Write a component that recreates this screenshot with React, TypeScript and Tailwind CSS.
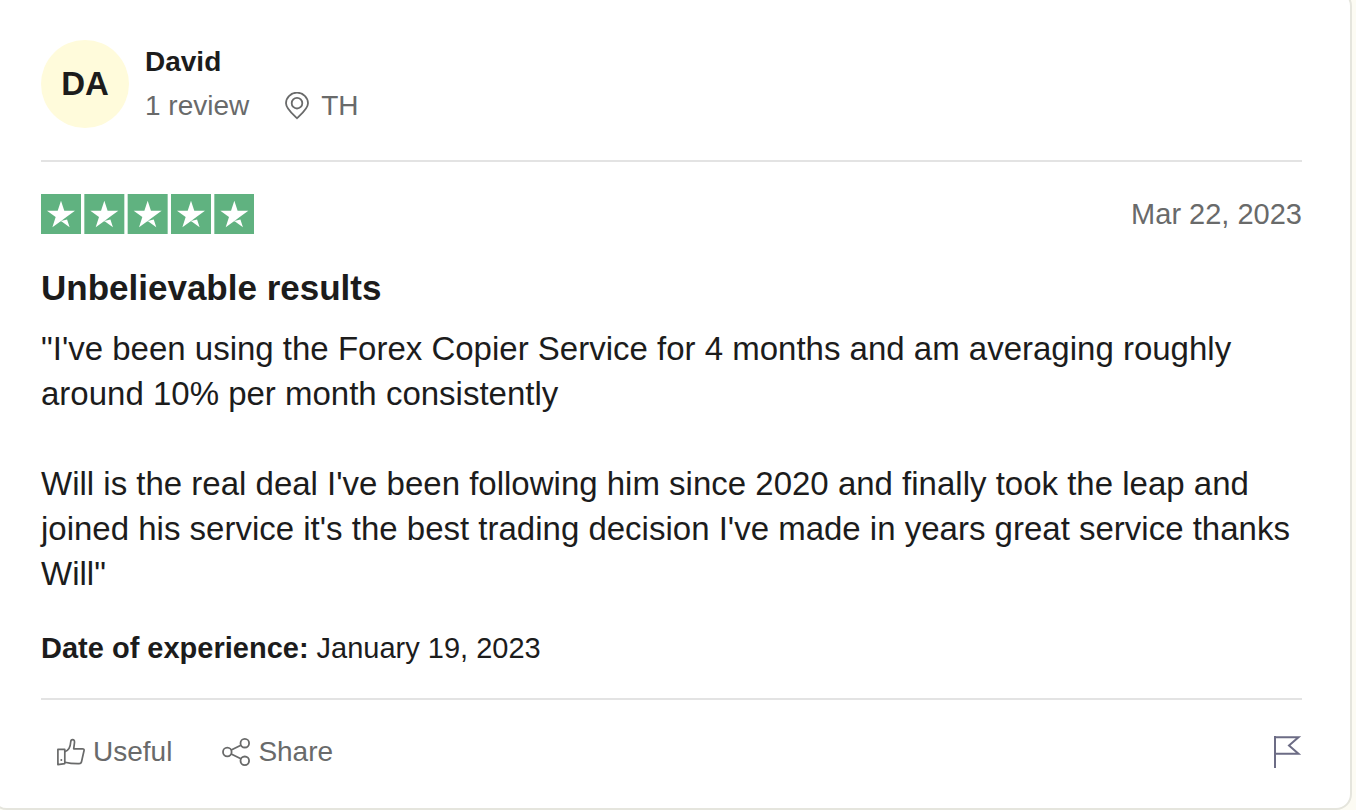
import type { ReactNode } from 'react'

interface Review {
  initials: string
  name: string
  count: string
  country: string
  date: string
  title: string
  paragraphs: string[]
  experienced: string
}

const review: Review = {
  initials: 'DA',
  name: 'David',
  count: '1 review',
  country: 'TH',
  date: 'Mar 22, 2023',
  title: 'Unbelievable results',
  paragraphs: [
    '"I\'ve been using the Forex Copier Service for 4 months and am averaging roughly around 10% per month consistently',
    'Will is the real deal I\'ve been following him since 2020 and finally took the leap and joined his service it\'s the best trading decision I\'ve made in years great service thanks Will"',
  ],
  experienced: 'January 19, 2023',
}

const PinIcon = () => (
  <svg className="w-6 h-7" viewBox="0 0 24 28" fill="none" stroke="currentColor" strokeWidth="1.8" aria-hidden="true">
    <path d="M12 26.2C8.500 22.600 1 17 1 11.300a11 10.600 0 0 1 22 0c0 5.700-7.500 11.300-11 14.900z" />
    <circle cx="12" cy="11.200" r="5.300" />
  </svg>
)

const ThumbIcon = () => (
  <svg className="w-7 h-7" viewBox="0 0 28 28" fill="none" stroke="currentColor" strokeWidth="1.7" strokeLinejoin="round" aria-hidden="true">
    <path d="M.9 11.400h6.900v14.200l-6.900 1z" />
    <path d="M7.800 13.700c3.400-1 5.600-4.400 5.900-9.700.1-1.600.8-2.400 1.900-2.400 1.300 0 2 1 1.900 2.700L16.700 10.800h8.600c1.500 0 2 .7 1.700 2l-2.500 11c-.3 1.400-1 1.900-2.400 1.900-5 .1-10-.4-14.300-1.500" />
    <circle cx="4.300" cy="22" r="1" fill="currentColor" stroke="none" />
  </svg>
)

const ShareIcon = () => (
  <svg className="w-7 h-7" viewBox="0 0 28 28" fill="none" stroke="currentColor" strokeWidth="1.8" aria-hidden="true">
    <circle cx="5.300" cy="14" r="4.300" />
    <circle cx="22.800" cy="5.200" r="4.300" />
    <circle cx="22.800" cy="22.800" r="4.300" />
    <path d="M9.200 12 18.900 7.200M9.200 16l9.700 4.800" />
  </svg>
)

const FlagIcon = () => (
  <svg className="w-7 h-8" viewBox="0 0 28 32" fill="none" stroke="currentColor" strokeWidth="2" aria-hidden="true">
    <path d="M1 32V0M1 1.300h23.500L15 9.500l9.500 8.200H1" />
  </svg>
)

const Stars = () => (
  <svg className="h-10 w-auto" viewBox="0 0 512 96" role="img" aria-label="Rated 5 out of 5 stars">
    {[0, 104, 208, 312, 416].map(x => (
      <g key={x} transform={`translate(${x} 0)`}>
        <path fill="#60b280" d="M0 0h96v96H0z" />
        <path fill="#fff" d="M48 64.700 62.600 61l6.100 18.800zm33.600-24.300H55.900L48 16.200l-7.900 24.200H14.400l20.800 15-7.900 24.200 20.800-15 12.800-9.200z" />
      </g>
    ))}
  </svg>
)

const Action = ({ icon, label }: { icon: ReactNode; label: string }) => (
  <button type="button" className="flex items-center gap-2 h-11 px-4">
    {icon}
    <span>{label}</span>
  </button>
)

export default function App() {
  return (
    <main className="min-h-screen overflow-hidden bg-[#fcfbf3] font-['Liberation_Sans',Arial,sans-serif] text-[#1c1c1c]">
      <article className="-mt-[10px] -ml-[9px] mr-1 px-12 pt-12 pb-[34px] bg-white border-2 border-[#e5e5dd] rounded-2xl">
        <header className="flex items-center gap-4 pb-8 border-b-2 border-[#e3e3e3]">
          <div className="flex items-center justify-center size-22 rounded-full bg-[#fffbdb] text-[33px] font-bold">{review.initials}</div>
          <div className="text-[28px] leading-11">
            <p className="font-bold">{review.name}</p>
            <div className="flex items-center text-[#696a6a]">
              <span>{review.count}</span>
              <span className="flex items-center gap-3 ml-9">
                <PinIcon />
                {review.country}
              </span>
            </div>
          </div>
        </header>

        <section className="pt-8 pb-[30px] border-b-2 border-[#e3e3e3]">
          <div className="flex items-center justify-between">
            <Stars />
            <time dateTime="2023-03-22" className="text-[29px] leading-10 text-[#696a6a]">{review.date}</time>
          </div>
          <h2 className="mt-8 text-[35px] leading-11 font-bold">{review.title}</h2>
          <div className="mt-4 space-y-[45px] text-[33px] leading-[45px]">
            {review.paragraphs.map(text => <p key={text}>{text}</p>)}
          </div>
          <p className="mt-8 text-[29px] leading-10">
            <b>Date of experience:</b> {review.experienced}
          </p>
        </section>

        <footer className="flex items-center justify-between pt-[30px] text-[28px] text-[#696a6a]">
          <div className="flex gap-[18px]">
            <Action icon={<ThumbIcon />} label="Useful" />
            <Action icon={<ShareIcon />} label="Share" />
          </div>
          <button type="button" aria-label="Report review" className="text-[#6c6c85]">
            <FlagIcon />
          </button>
        </footer>
      </article>
    </main>
  )
}
